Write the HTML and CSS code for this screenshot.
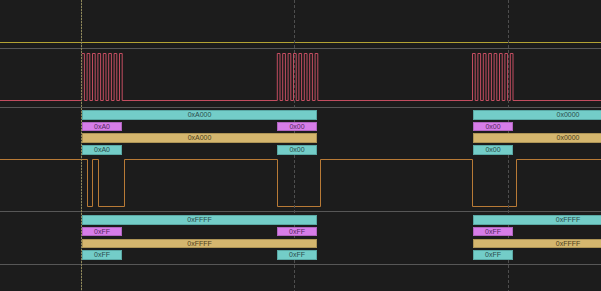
FILE: index.html
```html
<!DOCTYPE html>
<html lang="en">
<head>
    <meta charset="UTF-8">
    <title>Logic Trace</title>
    <link rel="stylesheet" href="styles.css">
</head>
<body>
    <div class="view">
        <!-- grid and cursor sit over the traces -->
        <div class="vline grid g1"></div>
        <div class="vline grid g2"></div>
        <div class="vline cursor"></div>

        <div class="ruler"></div>
        <div class="gap"></div>

        <!-- SCL -->
        <div class="channel clk">
            <svg class="trace" width="601" height="58">
                <path class="scl" d="M0 51.5 H81.7
                    v-47 h2.7 v47 h2.7 v-47 h2.7 v47 h2.7 v-47 h2.7 v47 h2.7 v-47 h2.7 v47 h2.7
                    v-47 h2.7 v47 h2.7 v-47 h2.7 v47 h2.7 v-47 h2.7 v47 h2.7 v-47 h2.7 v47
                    H277.3
                    v-47 h2.7 v47 h2.7 v-47 h2.7 v47 h2.7 v-47 h2.7 v47 h2.7 v-47 h2.7 v47 h2.7
                    v-47 h2.7 v47 h2.7 v-47 h2.7 v47 h2.7 v-47 h2.7 v47 h2.7 v-47 h2.7 v47
                    H472.5
                    v-47 h2.7 v47 h2.7 v-47 h2.7 v47 h2.7 v-47 h2.7 v47 h2.7 v-47 h2.7 v47 h2.7
                    v-47 h2.7 v47 h2.7 v-47 h2.7 v47 h2.7 v-47 h2.7 v47 h2.7 v-47 h2.7 v47
                    H601"/>
            </svg>
        </div>

        <!-- SDA with first decoder -->
        <div class="channel sda">
            <div class="annotations">
                <div class="ann-row">
                    <div class="bar cyan" style="left:82px;width:235px">0xA000</div>
                    <div class="bar cyan" style="left:473px;width:190px">0x0000</div>
                </div>
                <div class="ann-row">
                    <div class="bar magenta" style="left:82px;width:40px">0xA0</div>
                    <div class="bar magenta" style="left:277px;width:40px">0x00</div>
                    <div class="bar magenta" style="left:473px;width:40px">0x00</div>
                </div>
                <div class="ann-row">
                    <div class="bar tan" style="left:82px;width:235px">0xA000</div>
                    <div class="bar tan" style="left:473px;width:190px">0x0000</div>
                </div>
                <div class="ann-row">
                    <div class="bar cyan" style="left:82px;width:40px">0xA0</div>
                    <div class="bar cyan" style="left:277px;width:40px">0x00</div>
                    <div class="bar cyan" style="left:473px;width:40px">0x00</div>
                </div>
            </div>
            <svg class="trace" width="601" height="55">
                <path class="sdl" d="M0 3.5 H87.5 V50.5 H92.5 V3.5 H98.5 V50.5 H124.5 V3.5 H277.5 V50.5 H320.5 V3.5 H472.5 V50.5 H516.5 V3.5 H601"/>
            </svg>
        </div>

        <!-- second decoder -->
        <div class="channel dec2">
            <div class="annotations">
                <div class="ann-row">
                    <div class="bar cyan" style="left:82px;width:235px">0xFFFF</div>
                    <div class="bar cyan" style="left:473px;width:190px">0xFFFF</div>
                </div>
                <div class="ann-row">
                    <div class="bar magenta" style="left:82px;width:40px">0xFF</div>
                    <div class="bar magenta" style="left:277px;width:40px">0xFF</div>
                    <div class="bar magenta" style="left:473px;width:40px">0xFF</div>
                </div>
                <div class="ann-row">
                    <div class="bar tan" style="left:82px;width:235px">0xFFFF</div>
                    <div class="bar tan" style="left:473px;width:190px">0xFFFF</div>
                </div>
                <div class="ann-row">
                    <div class="bar cyan" style="left:82px;width:40px">0xFF</div>
                    <div class="bar cyan" style="left:277px;width:40px">0xFF</div>
                    <div class="bar cyan" style="left:473px;width:40px">0xFF</div>
                </div>
            </div>
        </div>
    </div>
</body>
</html>
```
FILE: styles.css
```css
body {
    margin: 0;
    background-color: #1c1c1c;
    font-family: "Liberation Sans", Arial, sans-serif;
}
.view {
    position: relative;
    width: 601px;
    height: 291px;
    overflow: hidden;
}
.ruler {
    height: 42px;
    border-bottom: 1px solid #b3a233;
}
.gap {
    height: 5px;
    border-bottom: 1px solid #575757;
}
.channel {
    border-bottom: 1px solid #575757;
}
.clk {
    height: 58px;
}
.sda {
    height: 103px;
}
.dec2 {
    height: 52px;
}
.trace {
    display: block;
}
.scl {
    fill: none;
    stroke: #c24d60;
    stroke-width: 1;
}
.sdl {
    fill: none;
    stroke: #b87a36;
    stroke-width: 1;
}
.annotations {
    display: flex;
    flex-direction: column;
    gap: 2.2px;
    padding-top: 2px;
    box-sizing: border-box;
}
.sda .annotations {
    height: 48px;
}
.dec2 .annotations {
    padding-top: 3.3px;
}
.ann-row {
    position: relative;
    height: 9.5px;
}
.bar {
    position: absolute;
    top: 0;
    bottom: 0;
    box-sizing: border-box;
    border: 1px solid;
    font-size: 7px;
    line-height: 7.5px;
    text-align: center;
    white-space: nowrap;
    overflow: hidden;
}
.cyan {
    background-color: #73cdc8;
    border-color: #5aa8a4;
    color: #2b4b4a;
}
.magenta {
    background-color: #d77de8;
    border-color: #b065c0;
    color: #55295f;
}
.tan {
    background-color: #d4b66e;
    border-color: #ad9456;
    color: #4d3f1c;
}
.vline {
    position: absolute;
    top: 0;
    bottom: 0;
    width: 1px;
}
.grid {
    background: repeating-linear-gradient(to bottom, #4e4e4e 0 3px, transparent 3px 5px);
}
.g1 {
    left: 294px;
}
.g2 {
    left: 508px;
}
.cursor {
    left: 81px;
    background: repeating-linear-gradient(to bottom, #8e8759 0 2px, #3a3933 2px 3px);
}
```
